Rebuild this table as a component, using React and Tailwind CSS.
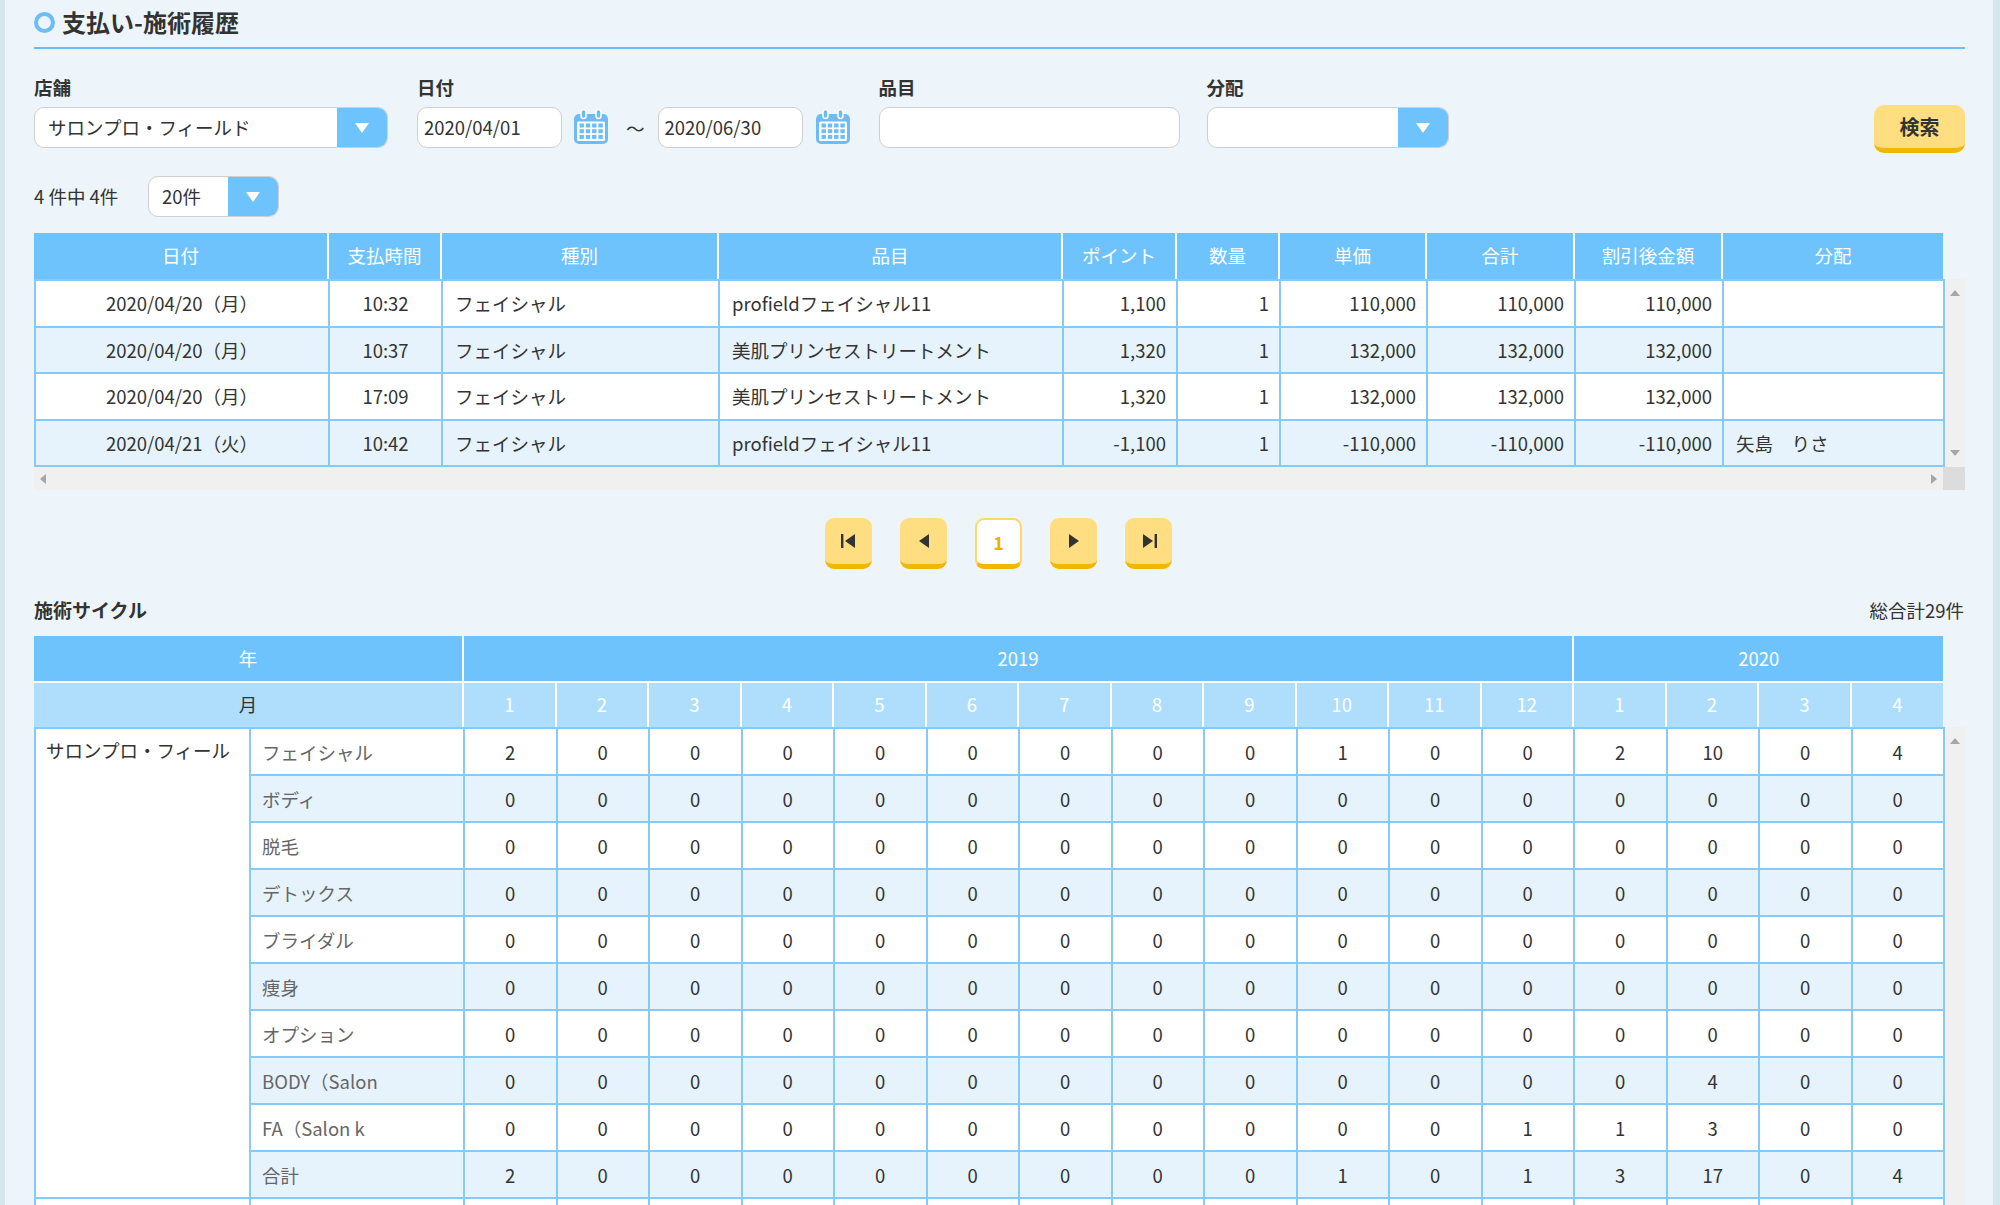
import React from "react";

function Tri({ className = "" }) {
  return (
    <svg width="16" height="12" viewBox="0 0 16 12" className={className}>
      <path d="M1 1 L15 1 L8 11 Z" fill="#ffffff" />
    </svg>
  );
}

function Calendar() {
  return (
    <svg width="38" height="37" viewBox="0 0 38 37" className="shrink-0">
      <rect x="2" y="5" width="34" height="30" rx="5" fill="#6cbcf5" />
      <rect x="5" y="12.5" width="28" height="19.5" rx="1.5" fill="#ffffff" />
      {[0, 1, 2, 3].map((c) =>
        [0, 1, 2].map((r) => (
          <rect
            key={c + "-" + r}
            x={7.5 + c * 6.3}
            y={14.5 + r * 5.7}
            width="4.4"
            height="4"
            fill="#6cbcf5"
          />
        ))
      )}
      <rect x="9" y="0.5" width="5" height="9" rx="2.5" fill="#6cbcf5" stroke="#ffffff" strokeWidth="1.5" />
      <rect x="24" y="0.5" width="5" height="9" rx="2.5" fill="#6cbcf5" stroke="#ffffff" strokeWidth="1.5" />
    </svg>
  );
}

function SelectBox({ widthClass, text }) {
  return (
    <div className={"flex h-[41px] rounded-[10px] border border-[#cfcfcf] bg-white overflow-hidden " + widthClass}>
      <div className="flex-1 flex items-center pl-[13px] text-[18.5px] text-[#333] whitespace-nowrap">{text}</div>
      <div className="w-[50px] bg-[#6ec3fd] flex items-center justify-center">
        <Tri />
      </div>
    </div>
  );
}

function VScroll({ down = true }) {
  return (
    <div className="w-[22px] bg-[#f0f0f0] flex flex-col items-center justify-between py-[11px]">
      <svg width="10" height="6" viewBox="0 0 10 6"><path d="M0 6 L10 6 L5 0 Z" fill="#a6a6a6" /></svg>
      {down ? <svg width="10" height="6" viewBox="0 0 10 6"><path d="M0 0 L10 0 L5 6 Z" fill="#a6a6a6" /></svg> : <span />}
    </div>
  );
}

const rows1 = [
  ["2020/04/20（月）", "10:32", "フェイシャル", "profieldフェイシャル11", "1,100", "1", "110,000", "110,000", "110,000", ""],
  ["2020/04/20（月）", "10:37", "フェイシャル", "美肌プリンセストリートメント", "1,320", "1", "132,000", "132,000", "132,000", ""],
  ["2020/04/20（月）", "17:09", "フェイシャル", "美肌プリンセストリートメント", "1,320", "1", "132,000", "132,000", "132,000", ""],
  ["2020/04/21（火）", "10:42", "フェイシャル", "profieldフェイシャル11", "-1,100", "1", "-110,000", "-110,000", "-110,000", "矢島　りさ"],
];
const heads1 = ["日付", "支払時間", "種別", "品目", "ポイント", "数量", "単価", "合計", "割引後金額", "分配"];
const align1 = [
  "text-center",
  "text-center",
  "text-left pl-[12px]",
  "text-left pl-[12px]",
  "text-right pr-[10px]",
  "text-right pr-[10px]",
  "text-right pr-[10px]",
  "text-right pr-[10px]",
  "text-right pr-[10px]",
  "text-left pl-[12px]",
];

function Cols1() {
  return (
    <colgroup>
      <col className="w-[294px]" />
      <col className="w-[113px]" />
      <col className="w-[277px]" />
      <col className="w-[344px]" />
      <col className="w-[114px]" />
      <col className="w-[103px]" />
      <col className="w-[147px]" />
      <col className="w-[148px]" />
      <col className="w-[148px]" />
      <col className="w-[221px]" />
    </colgroup>
  );
}

const cats = [
  ["フェイシャル", [2, 0, 0, 0, 0, 0, 0, 0, 0, 1, 0, 0, 2, 10, 0, 4]],
  ["ボディ", [0, 0, 0, 0, 0, 0, 0, 0, 0, 0, 0, 0, 0, 0, 0, 0]],
  ["脱毛", [0, 0, 0, 0, 0, 0, 0, 0, 0, 0, 0, 0, 0, 0, 0, 0]],
  ["デトックス", [0, 0, 0, 0, 0, 0, 0, 0, 0, 0, 0, 0, 0, 0, 0, 0]],
  ["ブライダル", [0, 0, 0, 0, 0, 0, 0, 0, 0, 0, 0, 0, 0, 0, 0, 0]],
  ["痩身", [0, 0, 0, 0, 0, 0, 0, 0, 0, 0, 0, 0, 0, 0, 0, 0]],
  ["オプション", [0, 0, 0, 0, 0, 0, 0, 0, 0, 0, 0, 0, 0, 0, 0, 0]],
  ["BODY（Salon", [0, 0, 0, 0, 0, 0, 0, 0, 0, 0, 0, 0, 0, 4, 0, 0]],
  ["FA（Salon k", [0, 0, 0, 0, 0, 0, 0, 0, 0, 0, 0, 1, 1, 3, 0, 0]],
  ["合計", [2, 0, 0, 0, 0, 0, 0, 0, 0, 1, 0, 1, 3, 17, 0, 4]],
];
const months = [1, 2, 3, 4, 5, 6, 7, 8, 9, 10, 11, 12, 1, 2, 3, 4];

function Cols2() {
  return (
    <colgroup>
      <col className="w-[215px]" />
      <col className="w-[214px]" />
      {months.map((m, i) => (
        <col key={i} className="w-[92.5px]" />
      ))}
    </colgroup>
  );
}

function PagBtn({ children, active }) {
  return (
    <div
      className={
        "w-[47px] h-[51px] rounded-[9px] border-b-[5px] border-[#f2b705] flex items-center justify-center " +
        (active ? "bg-white border-x-2 border-t-2 border-x-[#ffd866] border-t-[#ffd866]" : "bg-[#ffde82]")
      }
    >
      {children}
    </div>
  );
}

export default function App() {
  return (
    <div className="w-[2000px] h-[1205px] overflow-hidden bg-[#eef5fa] flex font-['Noto_Sans_CJK_JP','Noto_Sans',sans-serif] text-[#333]">
      <div className="w-[5px] bg-[#d6e7eb] shrink-0" />
      <div className="flex-1 pl-[29px] pr-[28px]">
        {/* Title */}
        <div className="h-[49px] border-b-2 border-[#6cbcf5] flex items-center pb-[3px]">
          <div className="w-[21px] h-[21px] rounded-full border-[4px] border-[#6cbcf5] mr-[7px]" />
          <div className="text-[24px] font-bold leading-none text-[#333]">支払い-施術履歴</div>
        </div>

        {/* Filters */}
        <div className="flex items-end pt-[26px]">
          <div className="flex flex-col">
            <div className="text-[18.5px] font-bold leading-[24px] mb-[8px]">店舗</div>
            <SelectBox widthClass="w-[354px]" text="サロンプロ・フィールド" />
          </div>
          <div className="flex flex-col ml-[29px]">
            <div className="text-[18.5px] font-bold leading-[24px] mb-[8px]">日付</div>
            <div className="flex items-center">
              <div className="w-[145px] h-[41px] rounded-[10px] border border-[#cfcfcf] bg-white flex items-center pl-[6px] text-[18.5px]">2020/04/01</div>
              <div className="ml-[10px]"><Calendar /></div>
              <div className="ml-[16px] mr-[13px] text-[18.5px] mt-[2px]">～</div>
              <div className="w-[145px] h-[41px] rounded-[10px] border border-[#cfcfcf] bg-white flex items-center pl-[6px] text-[18.5px]">2020/06/30</div>
              <div className="ml-[11px]"><Calendar /></div>
            </div>
          </div>
          <div className="flex flex-col ml-[27px]">
            <div className="text-[18.5px] font-bold leading-[24px] mb-[8px]">品目</div>
            <div className="w-[301px] h-[41px] rounded-[10px] border border-[#cfcfcf] bg-white" />
          </div>
          <div className="flex flex-col ml-[27px]">
            <div className="text-[18.5px] font-bold leading-[24px] mb-[8px]">分配</div>
            <SelectBox widthClass="w-[242px]" text="" />
          </div>
          <div className="ml-auto mb-[-5px] w-[91px] h-[48px] rounded-[10px] bg-[#ffde82] border-b-[5px] border-[#f2b705] flex items-center justify-center text-[20px] font-bold">
            検索
          </div>
        </div>

        {/* count */}
        <div className="flex items-center mt-[28px]">
          <div className="text-[18.5px] w-[114px]">4 件中 4件</div>
          <SelectBox widthClass="w-[131px]" text="20件" />
        </div>

        {/* Table 1 */}
        <div className="mt-[16px] w-[1931px]">
          <table className="table-fixed border-collapse w-[1909px]">
            <Cols1 />
            <thead>
              <tr className="h-[46px] bg-[#6ec3fd]">
                {heads1.map((h, i) => (
                  <th key={i} className="font-normal text-white text-[18.5px] border-x-2 border-white first:border-l-0 last:border-r-0">
                    {h}
                  </th>
                ))}
              </tr>
            </thead>
          </table>
          <div className="flex">
            <table className="table-fixed border-collapse w-[1909px]">
              <Cols1 />
              <tbody>
                {rows1.map((r, ri) => (
                  <tr key={ri} className={"h-[46.5px] " + (ri % 2 === 1 ? "bg-[#e6f3fc]" : "bg-white")}>
                    {r.map((c, ci) => (
                      <td key={ci} className={"border-2 border-[#86cbf8] text-[18.5px] leading-[24px] whitespace-nowrap overflow-hidden " + align1[ci]}>
                        {c}
                      </td>
                    ))}
                  </tr>
                ))}
              </tbody>
            </table>
            <VScroll />
          </div>
          <div className="flex h-[23px]">
            <div className="w-[1909px] bg-[#f0f0f0] flex items-center justify-between px-[6px]">
              <svg width="6" height="10" viewBox="0 0 6 10"><path d="M6 0 L6 10 L0 5 Z" fill="#a6a6a6" /></svg>
              <svg width="6" height="10" viewBox="0 0 6 10"><path d="M0 0 L0 10 L6 5 Z" fill="#a6a6a6" /></svg>
            </div>
            <div className="w-[22px] bg-[#dcdcdc]" />
          </div>
        </div>

        {/* Pagination */}
        <div className="flex justify-center gap-[28px] mt-[28px] pr-[2px]">
          <PagBtn>
            <svg width="18" height="14" viewBox="0 0 18 14">
              <rect x="1" y="0" width="2.4" height="14" fill="#333" />
              <path d="M15 0 L15 14 L5 7 Z" fill="#333" />
            </svg>
          </PagBtn>
          <PagBtn>
            <svg width="12" height="14" viewBox="0 0 12 14">
              <path d="M11 0 L11 14 L1 7 Z" fill="#333" />
            </svg>
          </PagBtn>
          <PagBtn active>
            <span className="text-[18px] font-bold text-[#f0b000] leading-none">1</span>
          </PagBtn>
          <PagBtn>
            <svg width="12" height="14" viewBox="0 0 12 14">
              <path d="M1 0 L1 14 L11 7 Z" fill="#333" />
            </svg>
          </PagBtn>
          <PagBtn>
            <svg width="18" height="14" viewBox="0 0 18 14">
              <path d="M3 0 L3 14 L13 7 Z" fill="#333" />
              <rect x="14.6" y="0" width="2.4" height="14" fill="#333" />
            </svg>
          </PagBtn>
        </div>

        {/* Section 2 */}
        <div className="flex items-center justify-between mt-[30px] mb-[15px] leading-[22px]">
          <div className="text-[19px] font-bold">施術サイクル</div>
          <div className="text-[18.5px] mr-[1px]">総合計29件</div>
        </div>

        <div className="w-[1931px]">
          <table className="table-fixed border-collapse w-[1909px]">
            <Cols2 />
            <thead>
              <tr className="h-[46px] bg-[#6ec3fd]">
                <th colSpan={2} className="font-normal text-white text-[18.5px] border-r-2 border-white">年</th>
                <th colSpan={12} className="font-normal text-white text-[18.5px] border-x-2 border-white">2019</th>
                <th colSpan={4} className="font-normal text-white text-[18.5px] border-l-2 border-white">2020</th>
              </tr>
              <tr className="h-[45px] bg-[#afdefd]">
                <th colSpan={2} className="font-normal text-[#333] text-[18.5px] border-r-2 border-t-2 border-white">月</th>
                {months.map((m, i) => (
                  <th key={i} className="font-normal text-white text-[18.5px] border-x-2 border-t-2 border-white last:border-r-0">
                    {m}
                  </th>
                ))}
              </tr>
            </thead>
          </table>
          <div className="flex">
            <table className="table-fixed border-collapse w-[1909px]">
              <Cols2 />
              <tbody>
                {cats.map(([name, vals], ri) => (
                  <tr key={ri} className={"h-[47px] " + (ri % 2 === 1 ? "bg-[#e6f3fc]" : "bg-white")}>
                    {ri === 0 && (
                      <td rowSpan={10} className="bg-white border-2 border-[#86cbf8] align-top pt-[9px] pl-[10px] text-[18.5px] leading-[24px] whitespace-nowrap overflow-hidden">
                        サロンプロ・フィール
                      </td>
                    )}
                    <td className="border-2 border-[#86cbf8] pl-[11px] text-[18.5px] leading-[24px] text-[#666] whitespace-nowrap overflow-hidden">{name}</td>
                    {vals.map((v, vi) => (
                      <td key={vi} className="border-2 border-[#86cbf8] text-center text-[18.5px] leading-[24px]">
                        {v}
                      </td>
                    ))}
                  </tr>
                ))}
                <tr className="h-[47px] bg-white">
                  <td className="border-2 border-[#86cbf8]" />
                  <td className="border-2 border-[#86cbf8]" />
                  {months.map((m, i) => (
                    <td key={i} className="border-2 border-[#86cbf8]" />
                  ))}
                </tr>
              </tbody>
            </table>
            <VScroll down={false} />
          </div>
        </div>
      </div>
      <div className="w-[7px] bg-[#d6e7eb] shrink-0" />
    </div>
  );
}
